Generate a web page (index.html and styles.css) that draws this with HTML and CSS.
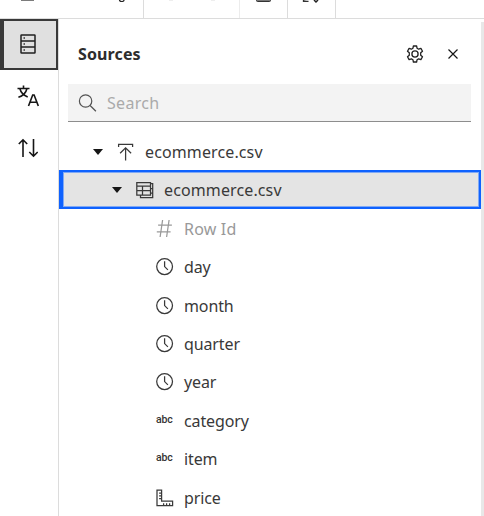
FILE: index.html
```
<!DOCTYPE html>
<html lang="en">
<head>
<meta charset="utf-8">
<title>Sources</title>
<link rel="stylesheet" href="styles.css">
</head>
<body>
<svg class="defs" aria-hidden="true">
  <symbol id="clock" viewBox="0 0 18 18"><circle cx="8.6" cy="8.6" r="7.9"/><path d="M8.6 3.3v5.3l3.3 3.3"/></symbol>
  <symbol id="caret" viewBox="0 0 10 6"><path d="M0 0h10L5 6z"/></symbol>
</svg>
<header class="toolbar">
  <div class="tool tool-file"><svg viewBox="0 0 143 18"><path d="M21 0h13" stroke="#444" stroke-width="1.4"/><path d="M119.5 0c0 2 4.5 2 4.5 0" stroke="#222" stroke-width="1.2"/></svg></div>
  <div class="tool tool-history"><svg viewBox="0 0 95 18"><path d="M25 .5h4M67 .5h4" stroke="#eee"/></svg></div>
  <div class="tool tool-small"><svg viewBox="0 0 47 18"><path d="M16.5 -2v2.5q0 1 1 1h12q1 0 1-1V-2" fill="#777" stroke="#333"/></svg></div>
  <div class="tool tool-small"><svg viewBox="0 0 47 18"><path d="M15.5 0v1.4h5" fill="#777" stroke="#333" stroke-width="1.3"/><path d="M26 0l2 2 2-2" stroke="#222" stroke-width="1.5"/></svg></div>
</header>
<div class="workspace">
  <nav class="rail">
    <button class="rail-item active" aria-label="Sources">
      <svg width="18" height="22" viewBox="0 0 18 22"><g stroke="#202020" stroke-width="1.5"><rect x="2" y="2" width="14" height="18" rx=".5"/><path d="M2 8h14M2 14h14"/></g><path d="M4.5 5h1.5M4.5 11h1.5M4.5 17h1.5" stroke="#333" stroke-width="1.5"/></svg>
    </button>
    <button class="rail-item" aria-label="Language">
      <svg width="22" height="22" viewBox="0 0 22 22" stroke="#161616" stroke-width="1.6"><path d="M.5 3.5h12M6.5.5v3M2.8 3.5C4 8 7 10.5 10.7 12M10 3.5C8.9 8 5.5 11 1.4 12.3M11.5 21l4.2-11h1.4l4.2 11M12.8 17.3h7.2"/></svg>
    </button>
    <button class="rail-item" aria-label="Sort">
      <svg width="20" height="20" viewBox="0 0 20 20" stroke="#161616" stroke-width="1.6"><path d="M5 19V2M.8 6L5 1.8 9.2 6M15.5 1v17M11.3 14l4.2 4.2 4.2-4.2"/></svg>
    </button>
  </nav>
  <main class="panel">
    <div class="panel-head">
      <h1>Sources</h1>
      <svg class="gear" width="18" height="18" viewBox="0 0 18 18" stroke="#222" stroke-width="1.3"><circle cx="9" cy="9" r="3.1"/><path stroke-linejoin="round" d="M7.4 1h3.2l.5 2.3 1.5.9 2.3-.8 1.6 2.8-1.8 1.6v2.4l1.8 1.6-1.6 2.8-2.3-.8-1.5.9-.5 2.3H7.4l-.5-2.3-1.5-.9-2.3.8-1.6-2.8 1.8-1.6V7.8L1.5 6.2l1.6-2.8 2.3.8 1.5-.9z"/></svg>
      <svg class="close" width="10" height="10" viewBox="0 0 10 10" stroke="#161616" stroke-width="1.2"><path d="M.5.5l9 9M9.5.5l-9 9"/></svg>
    </div>
    <label class="search">
      <svg width="19" height="18" viewBox="0 0 19 18" stroke="#525252" stroke-width="1.2"><circle cx="7.6" cy="7" r="6.2"/><path d="M12.1 11.5l5.8 5.7"/></svg>
      <span class="search-text">Search</span>
    </label>
    <ul class="tree">
      <li class="row root">
        <svg class="caret"><use href="#caret"/></svg>
        <svg class="icon upload" viewBox="0 0 18 18"><path d="M1.6 4V1.3h14V4M8.6 17.5V5M3.1 10.2l5.5-5.4 5.5 5.4"/></svg>
        <span class="file">ecommerce.csv</span>
      </li>
      <li class="row table selected">
        <svg class="caret"><use href="#caret"/></svg>
        <svg class="icon" viewBox="0 0 18 18"><path d="M.8 1.5h13.7V14H.8zM.8 5h13.7M.8 9.5h13.7M6.5 5v9M14.5 2.5h2.2v14H4.5V14M14.5 7.5h2.2M14.5 12h2.2"/></svg>
        <span class="file">ecommerce.csv</span>
      </li>
      <li class="row field muted">
        <svg class="icon hash" viewBox="0 0 18 18"><path d="M6.6 0L4.1 17M13.1 0l-2.5 17M2.1 5h13.8M.8 11.8h13.8"/></svg>
        <span class="row-id">Row Id</span>
      </li>
      <li class="row field"><svg class="icon"><use href="#clock"/></svg><span>day</span></li>
      <li class="row field"><svg class="icon"><use href="#clock"/></svg><span>month</span></li>
      <li class="row field"><svg class="icon"><use href="#clock"/></svg><span>quarter</span></li>
      <li class="row field"><svg class="icon"><use href="#clock"/></svg><span>year</span></li>
      <li class="row field"><span class="icon abc">abc</span><span>category</span></li>
      <li class="row field"><span class="icon abc">abc</span><span>item</span></li>
      <li class="row field">
        <svg class="icon" viewBox="0 0 18 18"><path d="M1 1h4.6v11h11v4.6H1zM3.1 4h2.5M3.1 6.8h2.5M3.1 9.6h2.5M7.6 14.2v2.4M10.6 14.2v2.4M13.6 14.2v2.4"/></svg>
        <span>price</span>
      </li>
    </ul>
  </main>
  <div class="scroll-edge"></div>
</div>
</body>
</html>
```
FILE: styles.css
```
* { box-sizing: border-box; }
body {
  margin: 0;
  height: 516px;
  display: flex;
  flex-direction: column;
  overflow: hidden;
  background: #fff;
  color: #393939;
  font: 16px/22px "Noto Sans", sans-serif;
}
svg { display: block; flex: none; fill: none; }
.defs { position: absolute; width: 0; height: 0; }
.toolbar { display: flex; flex: none; height: 19px; border-bottom: 1px solid #dcdcdc; }
.tool { flex: none; border-right: 1px solid #dcdcdc; }
.tool svg { width: 100%; height: 18px; }
.tool-file { width: 144px; }
.tool-history { width: 96px; border-color: #ececec; }
.tool-small { width: 48px; }
.workspace { display: flex; flex: 1; min-height: 0; }
.rail { flex: none; width: 59px; border-right: 1px solid #dcdcdc; }
.rail-item {
  display: flex;
  align-items: center;
  justify-content: center;
  width: 58px;
  height: 52px;
  padding: 0 2px 0 0;
  border: 0;
  background: none;
}
.rail-item.active {
  height: 51px;
  padding: 0 4px 2px 0;
  border: 2px solid #393939;
  border-left-width: 4px;
  background: #e0e0e0;
}
.panel { width: 422px; flex: none; }
.panel-head { display: flex; align-items: center; height: 65px; padding: 5px 23px 0 19px; }
h1 { margin: 0; font-size: 16px; line-height: 22px; font-weight: 700; letter-spacing: .12px; color: #2d2d2d; }
.gear { margin-left: auto; }
.close { margin-left: 24px; }
.search {
  display: flex;
  align-items: center;
  width: 403px;
  height: 38px;
  margin-left: 9px;
  padding-left: 10px;
  gap: 10px;
  border-bottom: 1px solid #8d8d8d;
  background: #f3f3f3;
  color: #aaa;
}
.search-text { letter-spacing: .3px; }
.tree { margin: 11px 0 0; padding: 0; list-style: none; }
.row { display: flex; align-items: center; height: 38.4px; letter-spacing: -.12px; }
.root { padding-left: 34px; height: 37px; }
.table { padding-left: 49px; height: 39px; margin-bottom: .6px; }
.field { padding-left: 97px; }
.selected { border: 2px solid #0f62fe; border-left-width: 4px; background: #e4e4e4; box-shadow: inset 0 0 0 1px #80a9f5; }
.file { letter-spacing: .12px; }
.row-id { letter-spacing: .2px; }
.caret { width: 10px; height: 6px; fill: #161616; margin-right: 14px; }
.icon { width: 18px; height: 18px; margin-right: 10px; stroke: #393939; stroke-width: 1.25; flex: none; }
.muted { color: #999; }
.hash { stroke: #999; }
.abc { font: 500 10.5px/16px Roboto, sans-serif; letter-spacing: -.2px; color: #333; }
.scroll-edge { flex: 1; margin-top: 3px; background: #e8e8e8; }
```
